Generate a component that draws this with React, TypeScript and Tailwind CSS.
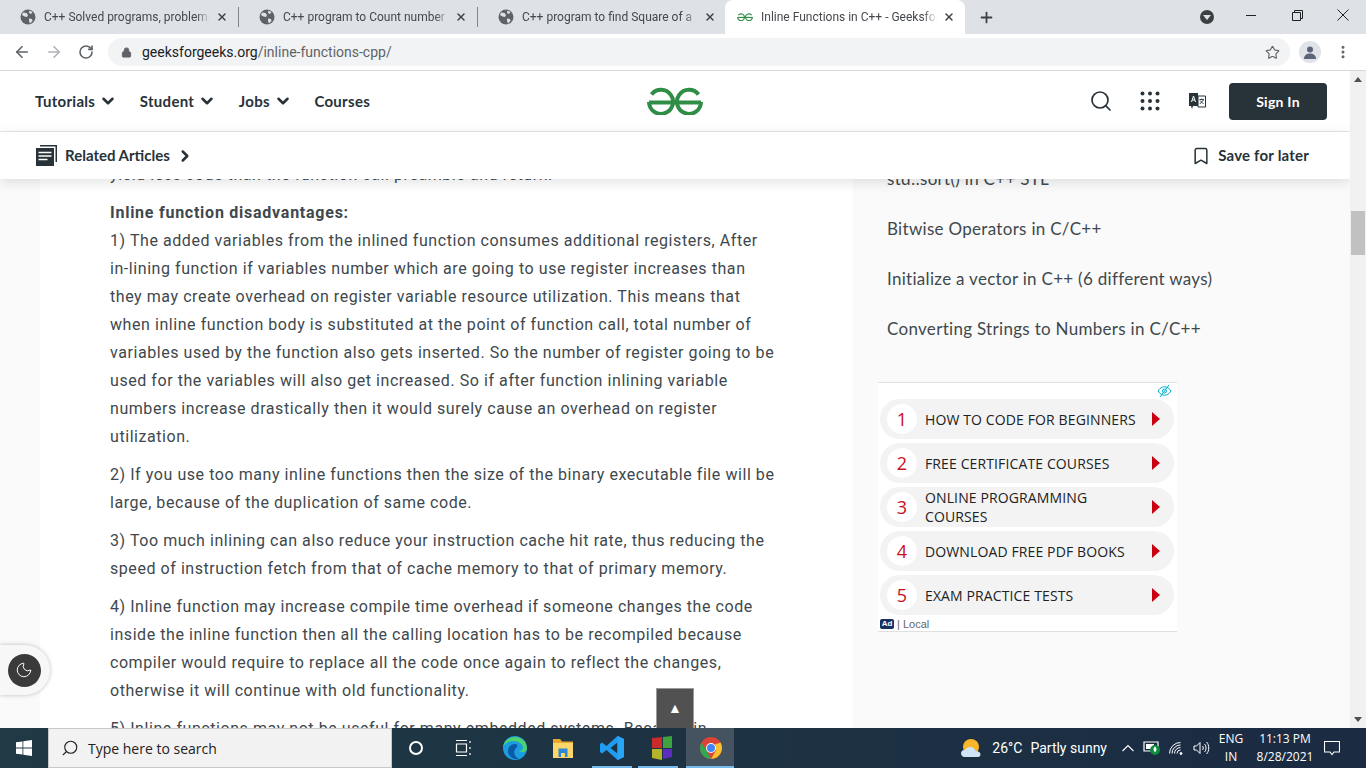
import { ChevronDown, ChevronRight, Search, Bookmark, Star, MoreVertical, ArrowLeft, ArrowRight, RotateCw, Lock, Plus, X, Moon } from 'lucide-react';

const articleParas = [
  ['1) The added variables from the inlined function consumes additional registers, After', 'in-lining function if variables number which are going to use register increases than', 'they may create overhead on register variable resource utilization. This means that', 'when inline function body is substituted at the point of function call, total number of', 'variables used by the function also gets inserted. So the number of register going to be', 'used for the variables will also get increased. So if after function inlining variable', 'numbers increase drastically then it would surely cause an overhead on register', 'utilization.'],
  ['2) If you use too many inline functions then the size of the binary executable file will be', 'large, because of the duplication of same code.'],
  ['3) Too much inlining can also reduce your instruction cache hit rate, thus reducing the', 'speed of instruction fetch from that of cache memory to that of primary memory.'],
  ['4) Inline function may increase compile time overhead if someone changes the code', 'inside the inline function then all the calling location has to be recompiled because', 'compiler would require to replace all the code once again to reflect the changes,', 'otherwise it will continue with old functionality.'],
  ['5) Inline functions may not be useful for many embedded systems. Because in'],
];

const adRows = [
  ['1', 'HOW TO CODE FOR BEGINNERS'],
  ['2', 'FREE CERTIFICATE COURSES'],
  ['3', 'ONLINE PROGRAMMING COURSES'],
  ['4', 'DOWNLOAD FREE PDF BOOKS'],
  ['5', 'EXAM PRACTICE TESTS'],
];

function Globe() {
  return (
    <svg width="16" height="16" viewBox="0 0 16 16" className="shrink-0">
      <circle cx="8" cy="8" r="7.5" fill="#5f6368" />
      <path d="M3 3.500l3.500.5 1.500 2-1 2-2.500-.5L2 6zM9 9.500l3 .5.5 2-2.500 2.500L9 12zM9.500 1.500l3 1.500-1.500 2-2-1z" fill="#dee1e6" />
    </svg>
  );
}

function GfgLogo({ w, h, color }: { w: number; h: number; color: string }) {
  return (
    <svg width={w} height={h} viewBox="0 0 56 28" fill="none" stroke={color} strokeWidth="4">
      <path d="M2 15.500H54" />
      <path d="M4.500 7.500A12 12 0 1 1 2 15" />
      <path d="M51.500 7.500A12 12 0 1 0 54 15" />
    </svg>
  );
}

function Tab({ title, divider, width }: { title: string; divider: boolean; width: string }) {
  return (
    <div className={`flex items-center h-[34px] pl-[20px] shrink-0 ${width}`}>
      <Globe />
      <span className="ml-[8px] w-[176px] overflow-hidden whitespace-nowrap text-[12px] font-['Roboto',sans-serif] text-[#45484d] [mask-image:linear-gradient(to_right,black_92%,transparent)]">{title}</span>
      <X size={12} strokeWidth={2.8} className="ml-[6px] shrink-0 text-[#3c4043]" />
      {divider && <div className="ml-[10px] w-px h-[20px] bg-[#80868b]" />}
    </div>
  );
}

function TopBar() {
  return (
    <div className="h-[34px] bg-[#dee1e6] flex items-end shrink-0">
      <Tab title="C++ Solved programs, problems/" divider width="w-[239px]" />
      <Tab title="C++ program to Count number of" divider width="w-[239px]" />
      <Tab title="C++ program to find Square of a" divider={false} width="w-[247px]" />
      <div className="w-[240px] h-[34px] bg-white rounded-t-lg flex items-center pl-[12px] shrink-0">
        <GfgLogo w={16} h={8} color="#2f8d46" />
        <span className="ml-[8px] w-[176px] overflow-hidden whitespace-nowrap text-[12px] font-['Roboto',sans-serif] text-[#45484d] [mask-image:linear-gradient(to_right,black_92%,transparent)]">Inline Functions in C++ - GeeksforGeeks</span>
        <X size={12} strokeWidth={2.8} className="ml-[6px] shrink-0 text-[#3c4043]" />
      </div>
      <div className="h-[34px] flex items-center ml-[13px]">
        <Plus size={17} strokeWidth={2.5} className="text-[#3c4043]" />
      </div>
      <div className="h-[34px] flex items-center ml-[205px]">
        <div className="w-[14px] h-[14px] rounded-full bg-[#3c4043] flex items-center justify-center">
          <div className="w-0 h-0 border-l-[4px] border-r-[4px] border-t-[5px] border-l-transparent border-r-transparent border-t-[#dee1e6]" />
        </div>
      </div>
      <div className="h-[30px] self-start flex items-center ml-[32px]">
        <div className="w-[10px] h-px bg-[#202124]" />
        <svg width="11" height="11" viewBox="0 0 11 11" fill="none" stroke="#202124" className="ml-[36px]"><path d="M.5 2.500h8v8h-8zM2.500 2.500v-2h8v8h-2" /></svg>
        <svg width="12" height="12" viewBox="0 0 12 12" fill="none" stroke="#202124" className="ml-[34px]"><path d="M.5.500l11 11M11.500.500l-11 11" /></svg>
      </div>
    </div>
  );
}

function Toolbar() {
  return (
    <div className="h-[37px] bg-white border-b border-[#d6d8db] flex items-center shrink-0 pl-[13px]">
      <ArrowLeft size={18} className="text-[#5f6368]" strokeWidth={2.2} />
      <ArrowRight size={18} className="ml-[14px] text-[#b0b3b8]" strokeWidth={2.2} />
      <RotateCw size={16} className="ml-[15px] text-[#5f6368]" strokeWidth={2.4} />
      <div className="ml-[14px] w-[1182px] h-[28px] rounded-full bg-[#f1f3f4] flex items-center pl-[13px] pr-[10px]">
        <Lock size={11} className="text-[#5f6368] fill-[#5f6368]" />
        <span className="ml-[10px] text-[14px] font-['Roboto',sans-serif] text-[#202124]">geeksforgeeks.org<span className="text-[#5f6368]">/inline-functions-cpp/</span></span>
        <Star size={15} className="ml-auto text-[#5f6368]" strokeWidth={1.8} />
      </div>
      <div className="ml-[9px] w-[22px] h-[22px] rounded-full bg-[#e0e3e8] flex items-center justify-center overflow-hidden">
        <svg width="14" height="14" viewBox="0 0 14 14" fill="#5b6478"><circle cx="7" cy="4.500" r="3" /><path d="M1 14c0-4 3-5.500 6-5.500s6 1.500 6 5.500z" /></svg>
      </div>
      <MoreVertical size={16} strokeWidth={2.5} className="ml-[14px] text-[#5f6368]" />
    </div>
  );
}

function NavItem({ label, chevron }: { label: string; chevron?: boolean }) {
  return (
    <div className="flex items-center text-[15px] font-bold tracking-[0.3px] text-[#273239]">
      {label}
      {chevron && <ChevronDown size={18} strokeWidth={3.4} className="ml-[4px]" />}
    </div>
  );
}

function SiteHeader() {
  return (
    <div className="h-[61px] bg-white border-b border-[#e8e8e8] flex items-center pl-[35px] pr-[23px] shrink-0 font-['Lato',sans-serif]">
      <div className="flex items-center gap-[22.5px] w-[335px]">
        <NavItem label="Tutorials" chevron />
        <NavItem label="Student" chevron />
        <NavItem label="Jobs" chevron />
        <NavItem label="Courses" />
      </div>
      <div className="ml-[277px]">
        <GfgLogo w={56} h={28} color="#2f8d46" />
      </div>
      <div className="flex items-center ml-auto">
        <Search size={24} strokeWidth={1.7} className="text-[#273239]" />
        <svg width="20" height="20" viewBox="0 0 20 20" fill="#273239" className="ml-[27px]">
          {[2.5, 10, 17.5].flatMap((y) => [2.5, 10, 17.5].map((x) => <circle key={`${x}-${y}`} cx={x} cy={y} r="2" />))}
        </svg>
        <svg width="18" height="18" viewBox="0 0 18 18" className="ml-[28px]">
          <path d="M1 1h9v13H5l-1 3-1-3H1z" fill="#273239" />
          <path d="M10 4h7.500v11H10z" fill="#fff" stroke="#273239" strokeWidth="1" />
          <path d="M3.500 10l2-6 2 6M4.200 8h2.600" stroke="#fff" fill="none" strokeWidth="1" />
          <path d="M11.500 7.500h4.500M13.700 6.500v1M11.800 12l3.700-4M12 8.500l3.500 3.500" stroke="#273239" fill="none" strokeWidth=".9" />
        </svg>
        <button className="ml-[23px] w-[98px] h-[37px] rounded-[4px] bg-[#273239] text-white text-[14px] tracking-[0.25px] font-bold">Sign In</button>
      </div>
    </div>
  );
}

function SubHeader() {
  return (
    <div className="h-[47px] bg-white flex items-center pl-[36px] pr-[41px] shrink-0 relative z-10 shadow-[0_3px_12px_rgba(0,0,0,0.12)] font-['Lato',sans-serif] text-[15px] font-bold text-[#273239]">
      <svg width="21" height="21" viewBox="0 0 21 21" fill="#273239">
        <path d="M4 0h17v17h-1.500V1.500H4z" />
        <path d="M0 3h18v18H0z" />
        <path d="M2.500 7.500h13M2.500 11h13M2.500 14.500h9" stroke="#fff" strokeWidth="1.300" />
      </svg>
      <span className="ml-[8px]">Related Articles</span>
      <ChevronRight size={18} strokeWidth={3.4} className="ml-[6px]" />
      <Bookmark size={20} strokeWidth={1.8} className="ml-auto" />
      <span className="ml-[7px] tracking-[0.2px]">Save for later</span>
    </div>
  );
}

function Article() {
  return (
    <div className="ml-[40px] w-[813px] bg-white pl-[70px] text-[16px] leading-[28px] tracking-[0.56px] text-[#40484d] font-['Roboto',sans-serif] whitespace-nowrap shrink-0">
      <p className="-mt-[18px]">yield less code than the function call preamble and return.</p>
      <p className="mt-[10px] font-bold tracking-[0.75px]">Inline function disadvantages:</p>
      {articleParas.map((lines, i) => (
        <div key={i} className={i === 0 ? '' : 'mt-[10px]'}>
          {lines.map((line) => <p key={line}>{line}</p>)}
        </div>
      ))}
    </div>
  );
}

function AdUnit() {
  return (
    <div className="mt-[28px] ml-[25px] w-[299px] h-[250px] bg-white border-y border-[#e0e0e0] px-[2px] font-['Open_Sans',sans-serif]">
      <div className="h-[16px] flex justify-end items-center pr-[3px]">
        <svg width="15" height="14" viewBox="0 0 15 14" fill="none" stroke="#00aecd" strokeWidth="1">
          <path d="M1 7c2-3 4-4.200 6.500-4.200S12 4 14 7c-2 3-4 4.200-6.500 4.200S3 10 1 7z" />
          <circle cx="7.500" cy="7" r="2" />
          <path d="M12 1L3 13" />
        </svg>
      </div>
      <div className="flex flex-col gap-[4px]">
        {adRows.map(([num, label]) => (
          <div key={num} className="h-[40px] w-[294px] rounded-full bg-[#f3f3f3] flex items-center pl-[7px]">
            <div className="w-[30px] h-[30px] rounded-full bg-white flex items-center justify-center text-[18px] text-[#c8101c] shrink-0">{num}</div>
            <div className="ml-[8px] w-[218px] text-[14px] leading-[19px] tracking-[0.12px] text-[#222]">{label}</div>
            <div className="ml-[9px] w-0 h-0 border-y-[7px] border-l-[8px] border-y-transparent border-l-[#c8000f]" />
          </div>
        ))}
      </div>
      <div className="mt-[1px] flex items-center font-['Liberation_Sans',sans-serif] text-[11px] text-[#666]">
        <span className="w-[14px] h-[10px] rounded-[2px] bg-[#17305e] text-white text-[8px] font-bold flex items-center justify-center">Ad</span>
        <span className="ml-[3px]">| Local</span>
      </div>
    </div>
  );
}

function Sidebar() {
  const links = ['std::sort() in C++ STL', 'Bitwise Operators in C/C++', 'Initialize a vector in C++ (6 different ways)', 'Converting Strings to Numbers in C/C++'];
  return (
    <div className="w-[497px] shrink-0">
      <div className="-mt-[25px] ml-[34px] font-['Lato',sans-serif] text-[17px] tracking-[0.3px] text-[#40484d]">
        {links.map((link) => <div key={link} className="h-[50px] flex items-center whitespace-nowrap">{link}</div>)}
      </div>
      <AdUnit />
    </div>
  );
}

function Scrollbar() {
  return (
    <div className="w-[16px] bg-[#f1f1f1] shrink-0 flex flex-col items-center justify-between relative z-20">
      <div className="mt-[6px] w-0 h-0 border-x-[4px] border-b-[5px] border-x-transparent border-b-[#505050]" />
      <div className="absolute top-[140px] left-[1px] w-[14px] h-[44px] bg-[#c1c1c1]" />
      <div className="mb-[6px] w-0 h-0 border-x-[4px] border-t-[5px] border-x-transparent border-t-[#505050]" />
    </div>
  );
}

function Taskbar() {
  return (
    <div className="h-[40px] bg-linear-to-r from-[#1f3a45] to-[#1b2b42] flex items-center shrink-0 text-white font-['Open_Sans',sans-serif] relative z-30">
      <div className="w-[48px] flex justify-center">
        <svg width="16" height="16" viewBox="0 0 16 16" fill="#fff"><path d="M0 2.300l6.500-.9v6.200H0zM7.300 1.300L16 0v7.600H7.300zM0 8.400h6.500v6.200L0 13.700zM7.300 8.400H16V16l-8.700-1.200z" /></svg>
      </div>
      <div className="w-[344px] h-[40px] bg-[#f2f2f2] border border-[#c8c8c8] flex items-center pl-[12px] text-[14px] text-[#222]">
        <Search size={18} strokeWidth={1.5} className="-scale-x-100 text-[#222]" />
        <span className="ml-[9px]">Type here to search</span>
      </div>
      <div className="w-[48px] flex justify-center"><div className="w-[14px] h-[14px] rounded-full border-2 border-white" /></div>
      <div className="w-[47px] flex justify-center">
        <svg width="18" height="18" viewBox="0 0 18 18" fill="none" stroke="#fff" strokeWidth="1.200"><path d="M1 1.500h11M1 16.500h11M1.500 5h10v8h-10zM15 2v2M15 8v2M15 14v2" /></svg>
      </div>
      <div className="w-[48px] ml-[4px] flex justify-center">
        <svg width="26" height="26" viewBox="0 0 26 26">
          <circle cx="13" cy="13" r="12" fill="#1b9de2" />
          <path d="M25 14c0-7-5-12-12-12C7 2 2 6 1 12c2-4 6-6 10-6 6 0 10 3 10 7 0 2-2 3-4 3 3 2 8 1 8-2z" fill="#4fd26b" />
          <path d="M13 9c-4 0-7 3-7 7 0 5 5 9 11 8-6-3-6-9-2-12 1-1 0-3-2-3z" fill="#0c59a4" />
        </svg>
      </div>
      <div className="w-[48px] flex justify-center">
        <svg width="22" height="20" viewBox="0 0 22 20">
          <path d="M1 1h7l2 2.500h11V7H1z" fill="#e8a92a" />
          <path d="M1 5h20v15H1z" fill="#fcd669" />
          <path d="M6.500 10.500h9V19h-2.500v-4h-4v4H6.500z" fill="#2b88d8" />
        </svg>
      </div>
      <div className="w-[50px] h-[40px] flex flex-col items-center relative">
        <svg width="26" height="26" viewBox="0 0 26 26" className="mt-[7px]">
          <path d="M18.500 1L25 4v18l-6.500 3L7.500 15 3 18.500 1 17V9l2-1.500 4.500 3.500z" fill="#1f9cf0" />
          <path d="M18.500 7.500L11.500 13l7 5.500z" fill="#1e3340" />
          <path d="M18.500 1L25 4v18l-6.500 3z" fill="#2aa5f5" />
        </svg>
        <div className="absolute bottom-0 left-[5px] w-[40px] h-[2px] bg-[#76b9ed]" />
      </div>
      <div className="w-[49px] h-[40px] flex flex-col items-center relative">
        <svg width="24" height="26" viewBox="0 0 24 26" className="mt-[7px]">
          <path d="M2 3l10-1v11H2z" fill="#c92a2a" />
          <path d="M13 2l9-1v12h-9z" fill="#3ea33e" />
          <path d="M2 14h10v11l-10-2z" fill="#b4b42a" />
          <path d="M13 14h9v8l-9 2z" fill="#5c2dc1" />
        </svg>
        <div className="absolute bottom-0 left-[1px] w-[40px] h-[2px] bg-[#76b9ed]" />
      </div>
      <div className="w-[48px] h-[40px] bg-[#44535f] flex justify-center items-center relative pl-[1px]">
        <svg width="24" height="24" viewBox="0 0 24 24">
          <circle cx="12" cy="12" r="11" fill="#db4437" />
          <path d="M2.500 6.500L8 15.500 12 23A11 11 0 0 1 2.500 6.500z" fill="#2fa84f" />
          <path d="M21.500 6.500A11 11 0 0 1 12 23l5-8.500-1-6z" fill="#fbc02d" />
          <circle cx="12" cy="12" r="5" fill="#fff" />
          <circle cx="12" cy="12" r="4" fill="#4285f4" />
        </svg>
        <div className="absolute bottom-0 left-0 w-full h-[2px] bg-[#76b9ed]" />
      </div>
      <div className="flex-1" />
      <div className="flex items-center text-[14px] font-['Roboto',sans-serif]">
        <svg width="22" height="20" viewBox="0 0 22 20">
          <circle cx="11" cy="9" r="8" fill="#f9b52c" />
          <path d="M5 19c-3 0-4-2-4-4 0-2 2-3.500 4-3 1-2 3-3 5-3 3 0 5 2 5.500 4 3 0 5 1.500 5 3.500S19 19 17 19z" fill="#cfe6f7" />
        </svg>
        <span className="ml-[10px]">26°C</span>
        <span className="ml-[8px]">Partly sunny</span>
      </div>
      <div className="ml-[15px] flex items-center">
        <svg width="12" height="8" viewBox="0 0 12 8" fill="none" stroke="#fff" strokeWidth="1.100"><path d="M.5 7L6 1.500 11.500 7" /></svg>
        <svg width="18" height="14" viewBox="0 0 18 14" className="ml-[9px]">
          <path d="M1 1h14v9H1z" fill="none" stroke="#fff" strokeWidth="1.200" />
          <path d="M3 3h8v5H3z" fill="#fff" />
          <circle cx="12" cy="9" r="5" fill="#0f8a3c" />
          <path d="M12 5.500c2 1.500 2 3.500 0 6-2-2.500-2-4.500 0-6z" fill="#fff" />
        </svg>
        <svg width="16" height="14" viewBox="0 0 16 14" className="ml-[7px]" fill="none" stroke="#fff" strokeWidth="1">
          <path d="M1.500 12.500a11 11 0 0 1 11-11M4 12.500a8.500 8.500 0 0 1 8.500-8.500M6.500 12.500a6 6 0 0 1 6-6M9 12.500a3.500 3.500 0 0 1 3.500-3.500" />
          <circle cx="13" cy="12.500" r="1" fill="#fff" />
        </svg>
        <svg width="17" height="14" viewBox="0 0 17 14" className="ml-[9px]" fill="none" stroke="#fff" strokeWidth="1">
          <path d="M1 5v4h2.500L7 12.500v-11L3.500 5zM9.500 5c1 1 1 3 0 4M11.500 3c2 2 2 6 0 8M13.500 1c3 3 3 9 0 12" />
        </svg>
      </div>
      <div className="ml-[4px] w-[34px] text-center text-[12px] leading-[18px]">ENG<br />IN</div>
      <div className="ml-[5px] w-[64px] text-center text-[12px] leading-[18px] whitespace-nowrap">11:13 PM<br />8/28/2021</div>
      <div className="ml-[7px] mr-[26px]">
        <svg width="16" height="16" viewBox="0 0 16 16" fill="none" stroke="#fff" strokeWidth="1.100"><path d="M.5 1.500h15v10.500H10l-2 2.500-2-2.500H.5z" /></svg>
      </div>
    </div>
  );
}

export default function App() {
  return (
    <div className="w-[1366px] h-[768px] flex flex-col overflow-hidden bg-white relative font-['Open_Sans',sans-serif]">
      <TopBar />
      <Toolbar />
      <div className="flex flex-1 min-h-0">
        <div className="flex-1 min-w-0 flex flex-col">
          <SiteHeader />
          <SubHeader />
          <div className="flex-1 min-h-0 flex overflow-hidden bg-[#fafafa]">
            <Article />
            <Sidebar />
          </div>
        </div>
        <Scrollbar />
      </div>
      <Taskbar />
      <div className="absolute left-0 top-[645px] w-[50px] h-[50px] bg-[#f7f7f7] rounded-r-[25px] shadow-[0_0_4px_rgba(0,0,0,0.25)] flex items-center justify-center pr-[2px] z-20">
        <div className="w-[33px] h-[33px] rounded-full bg-[#3a3a3a] flex items-center justify-center">
          <Moon size={18} strokeWidth={1.300} className="text-white" />
        </div>
      </div>
      <div className="absolute left-[656px] top-[688px] w-[38px] h-[40px] bg-[#515151] border border-[#9a9a9a] border-b-0 flex items-center justify-center pb-[2px] text-white text-[14px] z-20">▲</div>
    </div>
  );
}
